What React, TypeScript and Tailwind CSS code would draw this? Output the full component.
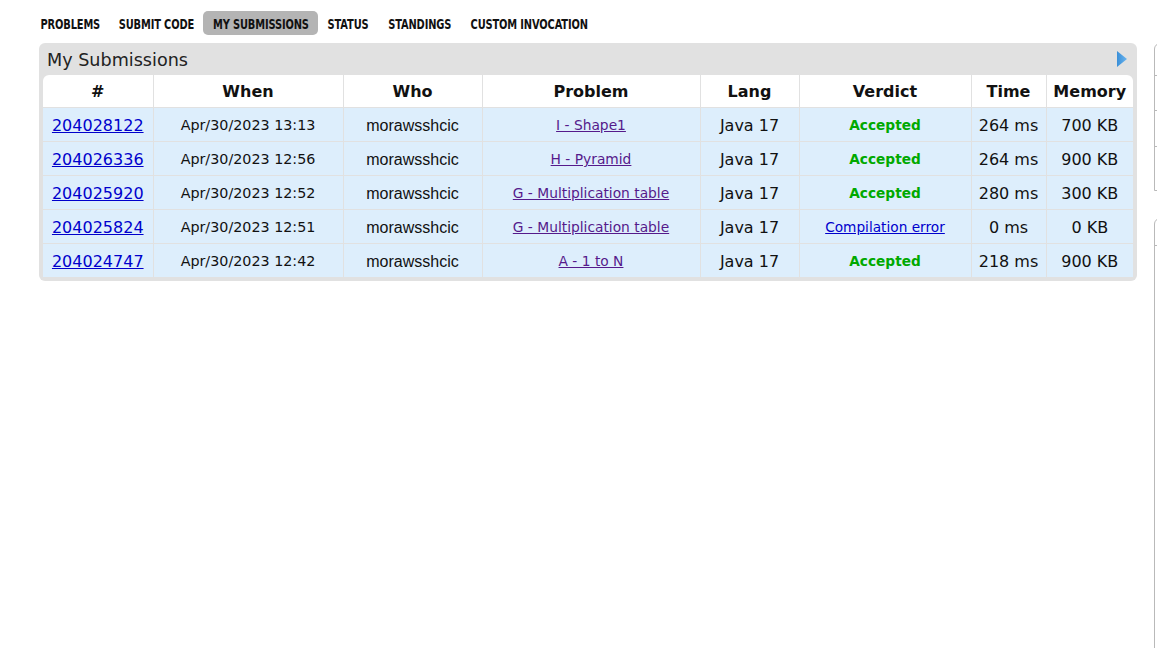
import React from "react";

const rows = [
  { id: "204028122", when: "Apr/30/2023 13:13", problem: "I - Shape1", verdict: "Accepted", time: "264 ms", mem: "700 KB" },
  { id: "204026336", when: "Apr/30/2023 12:56", problem: "H - Pyramid", verdict: "Accepted", time: "264 ms", mem: "900 KB" },
  { id: "204025920", when: "Apr/30/2023 12:52", problem: "G - Multiplication table", verdict: "Accepted", time: "280 ms", mem: "300 KB" },
  { id: "204025824", when: "Apr/30/2023 12:51", problem: "G - Multiplication table", verdict: "Compilation error", time: "0 ms", mem: "0 KB" },
  { id: "204024747", when: "Apr/30/2023 12:42", problem: "A - 1 to N", verdict: "Accepted", time: "218 ms", mem: "900 KB" },
];

const navItems: { label: string; w: string; active?: boolean }[] = [
  { label: "PROBLEMS", w: "w-[80px]" },
  { label: "SUBMIT CODE", w: "w-[93px]" },
  { label: "MY SUBMISSIONS", w: "w-[115px]", active: true },
  { label: "STATUS", w: "w-[61px]" },
  { label: "STANDINGS", w: "w-[82px]" },
  { label: "CUSTOM INVOCATION", w: "w-[136px]" },
];

export default function App() {
  return (
    <div className="relative w-[1157px] h-[648px] bg-white overflow-hidden" style={{ fontFamily: "'DejaVu Sans', Verdana, sans-serif" }}>
      <div className="pt-[11px]">
        <div className="flex items-center pl-[30px] h-[24px] text-[14px] font-bold text-[#111]" style={{ fontFamily: "'DejaVu Sans', sans-serif" }}>
          {navItems.map((n) => (
            <div
              key={n.label}
              className={
                n.w +
                " h-[24px] pt-[2px] flex items-center justify-center whitespace-nowrap " +
                (n.active ? "rounded-[5px] bg-[#b4b4b4]" : "")
              }
            >
              <span className="inline-block scale-x-[0.705] tracking-[-0.2px]">{n.label}</span>
            </div>
          ))}
        </div>
        <div className="ml-[39px] mt-[8px] w-[1098px] rounded-[6px] bg-[#e1e1e1] pb-[4px]">
          <div className="h-[32px] flex items-center justify-between pl-[8px] pr-[10px]">
            <span className="text-[17.6px] text-[#222] pt-[3px]">My Submissions</span>
            <svg width="10" height="16" viewBox="0 0 10 16">
              <defs>
                <linearGradient id="g" x1="0" y1="0" x2="1" y2="0">
                  <stop offset="0" stopColor="#3a8fd8" />
                  <stop offset="1" stopColor="#6ab4ee" />
                </linearGradient>
              </defs>
              <path d="M0 0 L10 8 L0 16 Z" fill="url(#g)" />
            </svg>
          </div>
          <div className="mx-[4px] rounded-t-[6px] overflow-hidden">
            <table className="w-[1090px] border-collapse table-fixed">
              <colgroup>
                <col className="w-[110px]" />
                <col className="w-[190px]" />
                <col className="w-[139px]" />
                <col className="w-[218px]" />
                <col className="w-[99px]" />
                <col className="w-[172px]" />
                <col className="w-[75px]" />
                <col className="w-[87px]" />
              </colgroup>
              <thead>
                <tr className="h-[32px] bg-white text-[16px] font-bold text-[#111]">
                  {["#", "When", "Who", "Problem", "Lang", "Verdict", "Time", "Memory"].map((h, i) => (
                    <th key={h} className={"font-bold text-center p-0 pt-[2px] " + (i > 0 ? "border-l border-[#e1e1e1]" : "")}>
                      {h}
                    </th>
                  ))}
                </tr>
              </thead>
              <tbody>
                {rows.map((r) => (
                  <tr key={r.id} className="h-[34px] bg-[#ddeefc] border-t border-[#e1e1e1] text-[#111]">
                    <td className="text-center p-0 pt-[3px] text-[16px]">
                      <a href="#" className="text-[#0000cc] underline">{r.id}</a>
                    </td>
                    <td className="text-center p-0 pt-[3px] text-[14.3px] border-l border-[#e1e1e1]">{r.when}</td>
                    <td className="text-center p-0 pt-[3px] text-[16px] border-l border-[#e1e1e1]" style={{ fontFamily: "'Liberation Sans', Arial, sans-serif" }}>morawsshcic</td>
                    <td className="text-center p-0 pt-[3px] text-[13.8px] border-l border-[#e1e1e1]">
                      <a href="#" className="text-[#551a8b] underline">{r.problem}</a>
                    </td>
                    <td className="text-center p-0 pt-[3px] text-[16px] border-l border-[#e1e1e1]">Java 17</td>
                    <td className="text-center p-0 pt-[3px] text-[13.7px] border-l border-[#e1e1e1]">
                      {r.verdict === "Accepted" ? (
                        <span className="font-bold text-[#00a900]">Accepted</span>
                      ) : (
                        <a href="#" className="text-[#0000cc] underline">{r.verdict}</a>
                      )}
                    </td>
                    <td className="text-center p-0 pt-[3px] text-[16px] border-l border-[#e1e1e1]">{r.time}</td>
                    <td className="text-center p-0 pt-[3px] text-[16px] border-l border-[#e1e1e1]">{r.mem}</td>
                  </tr>
                ))}
              </tbody>
            </table>
          </div>
        </div>
      </div>
      <div className="absolute left-[1154px] top-[43px] w-[40px] h-[148px] border border-[#b9b9b9] rounded-tl-[6px] flex flex-col">
        <div className="h-[32px] border-b border-[#b9b9b9]" />
        <div className="h-[35px] border-b border-[#b9b9b9]" />
        <div className="h-[36px] border-b border-[#b9b9b9]" />
      </div>
      <div className="absolute left-[1154px] top-[218px] w-[40px] h-[440px] border border-[#b9b9b9] rounded-tl-[6px]">
        <div className="h-[27px] border-b border-[#b9b9b9]" />
      </div>
    </div>
  );
}
